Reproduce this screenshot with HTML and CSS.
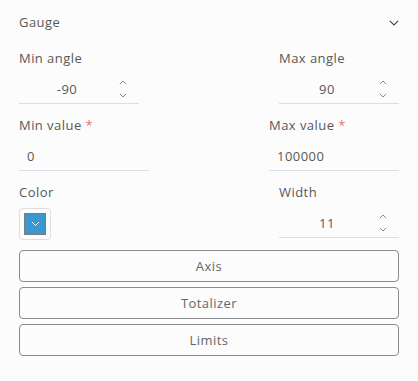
FILE: index.html
```html
<!DOCTYPE html>
<html>
<head>
<meta charset="utf-8">
<link rel="stylesheet" href="styles.css">
</head>
<body>
<div class="panel">
  <div class="header">
    <span class="title">Gauge</span>
    <svg class="chev" width="10" height="6" viewBox="0 0 10 6"><path d="M0.8 0.8 L5 5 L9.2 0.8" fill="none" stroke="#444" stroke-width="1.1"/></svg>
  </div>
  <div class="grid">
    <div class="field w120">
      <div class="label">Min angle</div>
      <div class="input num"><span class="val">-90</span>
        <span class="spin">
          <svg width="8" height="5" viewBox="0 0 8 5"><path d="M0.8 4.2 L4 1 L7.2 4.2" fill="none" stroke="#888" stroke-width="1"/></svg>
          <svg width="8" height="5" viewBox="0 0 8 5"><path d="M0.8 0.8 L4 4 L7.2 0.8" fill="none" stroke="#888" stroke-width="1"/></svg>
        </span>
      </div>
    </div>
    <div class="field w120 right">
      <div class="label">Max angle</div>
      <div class="input num"><span class="val">90</span>
        <span class="spin">
          <svg width="8" height="5" viewBox="0 0 8 5"><path d="M0.8 4.2 L4 1 L7.2 4.2" fill="none" stroke="#888" stroke-width="1"/></svg>
          <svg width="8" height="5" viewBox="0 0 8 5"><path d="M0.8 0.8 L4 4 L7.2 0.8" fill="none" stroke="#888" stroke-width="1"/></svg>
        </span>
      </div>
    </div>
    <div class="field w130">
      <div class="label">Min value <span class="req">*</span></div>
      <div class="input text">0</div>
    </div>
    <div class="field w130 right">
      <div class="label">Max value <span class="req">*</span></div>
      <div class="input text">100000</div>
    </div>
    <div class="field w120">
      <div class="label">Color</div>
      <div class="swatch-box">
        <div class="swatch">
          <svg width="9" height="6" viewBox="0 0 9 6"><path d="M1 1 L4.5 4.5 L8 1" fill="none" stroke="#fff" stroke-width="1"/></svg>
        </div>
      </div>
    </div>
    <div class="field w120 right">
      <div class="label">Width</div>
      <div class="input num"><span class="val">11</span>
        <span class="spin">
          <svg width="8" height="5" viewBox="0 0 8 5"><path d="M0.8 4.2 L4 1 L7.2 4.2" fill="none" stroke="#888" stroke-width="1"/></svg>
          <svg width="8" height="5" viewBox="0 0 8 5"><path d="M0.8 0.8 L4 4 L7.2 0.8" fill="none" stroke="#888" stroke-width="1"/></svg>
        </span>
      </div>
    </div>
  </div>
  <div class="buttons">
    <button class="btn">Axis</button>
    <button class="btn">Totalizer</button>
    <button class="btn">Limits</button>
  </div>
</div>
</body>
</html>
```

FILE: styles.css
```css
html, body {
  margin: 0;
  padding: 0;
  background: #fcfcfc;
}
body {
  font-family: "Open Sans", "Liberation Sans", sans-serif;
  font-size: 13px;
  letter-spacing: 0.45px;
  color: #585858;
  width: 418px;
  height: 381px;
  overflow: hidden;
}
.panel {
  padding: 12px 19px 0 19px;
}
.header {
  display: flex;
  justify-content: space-between;
  align-items: center;
  height: 20px;
  line-height: 20px;
}
.chev {
  margin-top: 1px;
}
.grid {
  margin-top: 16px;
  display: grid;
  grid-template-columns: 1fr 1fr;
  row-gap: 11px;
}
.field {
  display: flex;
  flex-direction: column;
}
.field.right {
  justify-self: end;
}
.w120 { width: 120px; }
.w130 { width: 130px; }
.label {
  line-height: 20px;
  height: 20px;
  white-space: nowrap;
}
.req {
  color: #e57373;
}
.input {
  margin-top: 2px;
  padding: 9px 0 4px 0;
  line-height: 20px;
  border-bottom: 1px solid #dcdce4;
}
.input.num {
  display: flex;
  align-items: center;
  position: relative;
}
.input.num .val {
  flex: 1;
  text-align: center;
  padding-right: 24px;
}
.spin {
  position: absolute;
  right: 12px;
  top: 10px;
  display: flex;
  flex-direction: column;
  gap: 8px;
}
.spin svg {
  display: block;
}
.input.text {
  padding-left: 8px;
}
.swatch-box {
  margin-top: 6px;
  width: 30px;
  height: 30px;
  border: 1px solid #dedee6;
  border-radius: 4px;
  display: flex;
  align-items: center;
  justify-content: center;
}
.swatch {
  width: 20px;
  height: 20px;
  background: #3a98d0;
  border: 1px solid #7a7a7a;
  display: flex;
  align-items: center;
  justify-content: center;
}
.buttons {
  margin-top: 10px;
  display: flex;
  flex-direction: column;
  gap: 5px;
}
.btn {
  height: 32px;
  border: 1px solid #8a8a8a;
  border-radius: 4px;
  background: #fcfcfc;
  font-family: inherit;
  font-size: 13px;
  letter-spacing: 0.45px;
  color: #666;
  padding: 0;
}
```
